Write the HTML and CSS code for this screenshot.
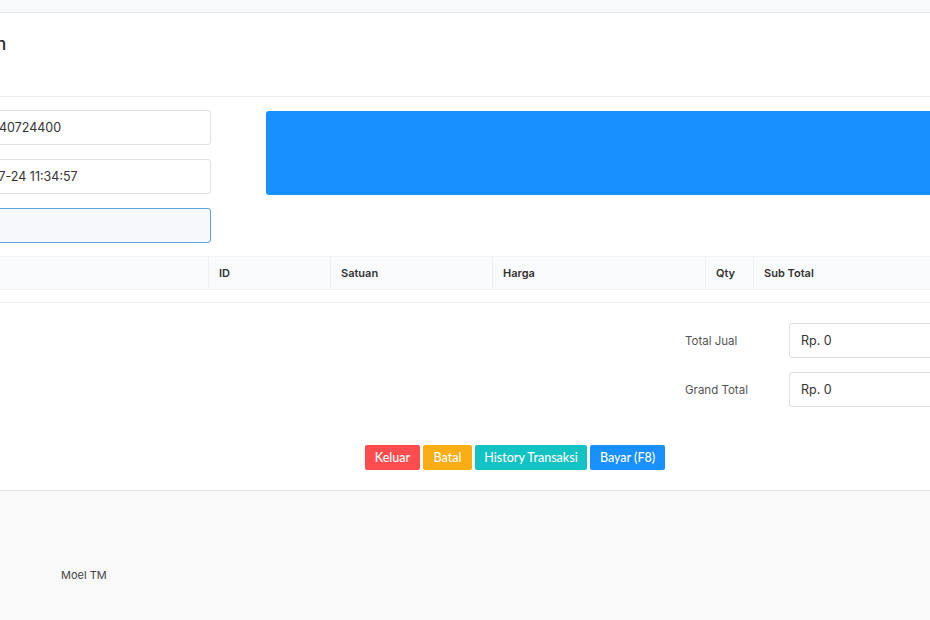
FILE: index.html
```html
<!DOCTYPE html>
<html lang="id">
<head>
<meta charset="utf-8">
<title>Transaksi Penjualan</title>
<link rel="stylesheet" href="styles.css">
</head>
<body>
<div class="topbar"></div>
<div class="wrap">
  <header class="page-head">
    <h1 class="page-title">Transaksi Penjualan</h1>
  </header>

  <section class="card-body">
    <div class="top-row">
      <div class="form-col">
        <input class="field" type="text" value="20240740724400" readonly>
        <input class="field" type="text" value="2024-07-24 11:34:57" readonly>
        <input class="field field-focus" type="text" value="">
      </div>
      <div class="display-box"></div>
    </div>

    <table class="items">
      <thead>
        <tr>
          <th class="c-name"></th>
          <th class="c-id">ID</th>
          <th class="c-unit">Satuan</th>
          <th class="c-price">Harga</th>
          <th class="c-qty">Qty</th>
          <th class="c-sub">Sub Total</th>
        </tr>
      </thead>
      <tbody>
        <tr class="empty-row"><td colspan="6"></td></tr>
      </tbody>
    </table>

    <div class="totals">
      <label class="t-label">Total Jual</label>
      <input class="field" type="text" value="Rp. 0" readonly>
      <label class="t-label">Grand Total</label>
      <input class="field" type="text" value="Rp. 0" readonly>
    </div>

    <div class="actions">
      <button class="btn btn-red">Keluar</button>
      <button class="btn btn-orange">Batal</button>
      <button class="btn btn-cyan">History Transaksi</button>
      <button class="btn btn-blue">Bayar (F8)</button>
    </div>
  </section>

  <footer class="footer">
    <span class="credit">Moel TM</span>
  </footer>
</div>
</body>
</html>
```

FILE: styles.css
```css
html, body {
  margin: 0;
  padding: 0;
  background: #ffffff;
  overflow: hidden;
  width: 930px;
  height: 620px;
}

body {
  font-family: Inter, "Noto Sans", Arial, sans-serif;
  color: #333;
}

.topbar {
  height: 12px;
  background: #f8f9fa;
  border-bottom: 1px solid #e6e7ea;
}

/* main column, wider than the window and shifted left */
.wrap {
  width: 1430px;
  margin-left: -200px;
}

.page-head {
  height: 84px;
  border-bottom: 1px solid #ececec;
  box-sizing: border-box;
  display: flex;
  align-items: center;
  padding-left: 44px;
  padding-bottom: 22px;
}

.page-title {
  margin: 0;
  font-size: 17px;
  font-weight: 500;
  color: #222;
}

.card-body {
  padding-top: 13px;
}

.top-row {
  display: flex;
  align-items: flex-start;
  padding-left: 142px;
  padding-right: 146px;
}

.form-col {
  width: 269px;
  display: flex;
  flex-direction: column;
  gap: 14px;
}

.field {
  box-sizing: border-box;
  height: 35px;
  width: 100%;
  border: 1px solid #dcdfe3;
  border-radius: 3px;
  padding: 0 11px;
  font-family: Inter, "Noto Sans", Arial, sans-serif;
  font-size: 12.5px;
  color: #333;
  background: #fff;
  outline: none;
}

.field-focus {
  background: #f6f8fb;
  border-color: #5aa6e0;
}

.display-box {
  flex: 1;
  margin-left: 55px;
  margin-top: 1px;
  height: 84px;
  background: #1890ff;
  border-radius: 3px;
}

.items {
  margin-top: 13px;
  margin-left: 146px;
  width: 1138px;
  border-collapse: collapse;
  table-layout: fixed;
}

.items th {
  height: 33px;
  box-sizing: border-box;
  background: #fafbfc;
  border: 1px solid #eef0f2;
  border-top-color: #f3f4f6;
  text-align: left;
  padding: 0 10px;
  font-size: 11px;
  font-weight: 600;
  color: #333;
}

.c-name { width: 262px; }
.c-id { width: 122px; }
.c-unit { width: 162px; }
.c-price { width: 213px; }
.c-qty { width: 48px; }

.empty-row td {
  height: 12px;
  padding: 0;
  border-bottom: 1px solid #eef0f2;
}

.totals {
  margin-top: 20px;
  margin-left: 885px;
  width: 399px;
  display: grid;
  grid-template-columns: 104px 1fr;
  row-gap: 14px;
  align-items: center;
}

.t-label {
  font-size: 11.5px;
  color: #555;
}

.actions {
  display: flex;
  justify-content: center;
  gap: 3px;
  margin-top: 38px;
  padding-bottom: 20px;
  border-bottom: 1px solid #e8e8e8;
}

.btn {
  height: 25px;
  border: none;
  border-radius: 2px;
  padding: 0;
  color: #fff;
  font-family: Lato, "Open Sans", Arial, sans-serif;
  font-size: 12.5px;
  font-weight: 500;
  cursor: pointer;
}

.btn-red { background: #ff4d4f; width: 55px; }
.btn-orange { background: #faad14; width: 49px; }
.btn-cyan { background: #13c2c2; width: 112px; }
.btn-blue { background: #1890ff; width: 75px; }

.footer {
  height: 130px;
  background: #f9f9f9;
  padding-left: 261px;
  box-sizing: border-box;
  padding-top: 72px;
}

.credit {
  font-size: 11px;
  color: #444;
}
```
